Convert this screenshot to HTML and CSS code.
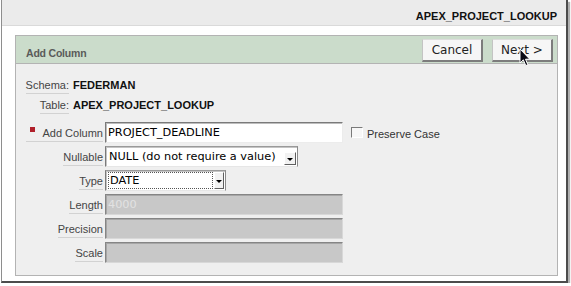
FILE: index.html
```html
<!DOCTYPE html>
<html>
<head>
<meta charset="utf-8">
<link rel="stylesheet" href="styles.css">
</head>
<body>
<div class="window">
  <div class="titlebar"><span class="title">APEX_PROJECT_LOOKUP</span></div>
  <div class="region">
    <div class="region-head">
      <span class="region-title">Add Column</span>
      <div class="btns">
        <button class="btn">Cancel</button>
        <button class="btn">Next &gt;</button>
      </div>
    </div>
    <div class="region-body">
      <div class="info">
        <span class="lbl">Schema:</span><span class="val">FEDERMAN</span>
        <span class="lbl">Table:</span><span class="val">APEX_PROJECT_LOOKUP</span>
      </div>
      <div class="form">
        <span class="flabel"><span class="req"></span>Add Column</span>
        <div class="fcell">
          <span class="input w-long">PROJECT_DEADLINE</span>
          <span class="check"></span>
          <span class="check-lbl">Preserve Case</span>
        </div>

        <span class="flabel">Nullable</span>
        <div class="fcell">
          <span class="select w-null"><span class="sel-text">NULL (do not require a value)</span><span class="arrow"></span></span>
        </div>

        <span class="flabel">Type</span>
        <div class="fcell">
          <span class="select w-type"><span class="sel-text focus">DATE</span><span class="arrow tall"></span></span>
        </div>

        <span class="flabel">Length</span>
        <div class="fcell"><span class="input w-long disabled">4000</span></div>

        <span class="flabel">Precision</span>
        <div class="fcell"><span class="input w-long disabled"></span></div>

        <span class="flabel">Scale</span>
        <div class="fcell"><span class="input w-long disabled"></span></div>
      </div>
    </div>
  </div>
  <svg class="cursor" width="12" height="19" viewBox="0 0 12 19">
    <path d="M1 1 L1 15 L4.3 11.8 L6.8 17.6 L8.9 16.7 L6.5 11.2 L10.8 11.2 Z" fill="#0a0a14" stroke="#ffffff" stroke-width="1"/>
  </svg>
</div>
</body>
</html>
```

FILE: styles.css
```css
html, body {
  margin: 0;
  padding: 0;
  background: #ffffff;
}

.window {
  position: relative;
  width: 564px;
  margin-left: 1px;
  background: #ffffff;
  border-left: 1px solid #8e8e8e;
  border-right: 2px solid #4c4c4c;
  border-bottom: 2px solid #4c4c4c;
  box-shadow: 2px 2px 1px #b0b0b0;
  font-family: "Liberation Sans", Arial, sans-serif;
}

.titlebar {
  height: 25px;
  background: #ebebeb;
  border-bottom: 1px solid #dadada;
  display: flex;
  justify-content: flex-end;
  align-items: center;
  padding-right: 9px;
}

.title {
  font-weight: bold;
  font-size: 11px;
  color: #111;
  margin-top: 7px;
}

.region {
  margin: 9px 8px 5px 13px;
  border: 1px solid #b3b3b3;
  background: #efefef;
}

.region-head {
  height: 27px;
  box-sizing: border-box;
  background: #cbdccb;
  border-bottom: 1px solid #b3b3b3;
  display: flex;
  justify-content: space-between;
  align-items: flex-start;
  padding: 3px 4px 0 10px;
  height: 28px;
}

.region-title {
  font-weight: bold;
  font-size: 10.5px;
  line-height: 14px;
  color: #5a5a5a;
  margin-top: 7px;
  letter-spacing: -0.2px;
}

.btns {
  display: flex;
  gap: 9px;
}

.btn {
  width: 61px;
  height: 23px;
  box-sizing: border-box;
  padding: 0;
  margin: 0;
  background: #f6f6f6;
  border-style: solid;
  border-width: 1px 2px 2px 1px;
  border-color: #dcdcdc #7c7c7c #7c7c7c #c4c4c4;
  font-family: "DejaVu Sans", sans-serif;
  font-size: 12px;
  color: #222;
  line-height: 19px;
  text-align: center;
}

.region-body {
  padding: 14px 0 12px 0;
}

.info {
  display: grid;
  grid-template-columns: 53px auto;
  grid-auto-rows: 16px;
  row-gap: 4px;
  column-gap: 4px;
  justify-content: start;
}

.lbl {
  justify-self: end;
  font-size: 11px;
  line-height: 14px;
  color: #444;
  padding-bottom: 1px;
  border-bottom: 1px solid #d2d2d2;
}

.val {
  font-size: 11px;
  line-height: 14px;
  font-weight: bold;
  color: #111;
}

.form {
  margin-top: 8px;
  display: grid;
  grid-template-columns: 89px 1fr;
  grid-auto-rows: 21px;
  row-gap: 3px;
}

.flabel {
  justify-self: end;
  align-self: end;
  display: flex;
  align-items: flex-start;
  margin: 0 2px 1px 0;
  font-size: 11px;
  line-height: 14px;
  color: #444;
  padding-bottom: 1px;
  border-bottom: 1px solid #d2d2d2;
}

.req {
  width: 5px;
  height: 5px;
  background: #b0202a;
  margin: 1px 7px 0 4px;
}

.fcell {
  display: flex;
  align-items: center;
}

.input {
  box-sizing: border-box;
  height: 21px;
  background: #ffffff;
  border: 1px solid;
  border-color: #7a7a7a #ececec #ececec #7a7a7a;
  box-shadow: inset 1px 1px 0 #bdbdbd;
  font-family: "DejaVu Sans", sans-serif;
  font-size: 11.3px;
  line-height: 19px;
  color: #000;
  padding-left: 2px;
  white-space: nowrap;
}

.w-long {
  width: 238px;
}

.input.disabled {
  background: #c8c8c8;
  border-color: #858585 #d8d8d8 #d8d8d8 #858585;
  box-shadow: inset 1px 1px 0 #a6a6a6;
  color: #e2e2e2;
}

.check {
  width: 12px;
  height: 11px;
  box-sizing: border-box;
  margin-left: 8px;
  background: #f7f7f7;
  border: 1px solid;
  border-color: #7a7a7a #ffffff #ffffff #7a7a7a;
}

.check-lbl {
  margin-left: 4px;
  font-size: 11px;
  color: #333;
  margin-top: 2px;
}

.select {
  box-sizing: border-box;
  height: 21px;
  display: flex;
  align-items: flex-end;
  background: #ffffff;
  border: 1px solid;
  border-color: #9a9a9a #8a8a8a #e6e6e6 #7a7a7a;
  box-shadow: inset 1px 1px 0 #c4c4c4;
  padding: 1px 1px 1px 2px;
}

.w-null {
  width: 193px;
}

.w-type {
  width: 121px;
}

.sel-text {
  flex: 1;
  align-self: stretch;
  font-family: "DejaVu Sans", sans-serif;
  font-size: 11.3px;
  line-height: 17px;
  color: #000;
  white-space: nowrap;
  padding-left: 1px;
}

.sel-text.focus {
  outline: 1px dotted #555;
  outline-offset: -1px;
  padding-left: 2px;
  margin-right: 1px;
}

.arrow {
  position: relative;
  width: 12px;
  height: 13px;
  box-sizing: border-box;
  background: #f2f2f2;
  border: 1px solid;
  border-color: #ffffff #5f5f5f #5f5f5f #ffffff;
}

.arrow.tall {
  width: 10px;
  height: 17px;
}

.arrow::after {
  content: "";
  position: absolute;
  left: 50%;
  top: 50%;
  margin-left: -3px;
  margin-top: -1px;
  border-left: 3px solid transparent;
  border-right: 3px solid transparent;
  border-top: 3px solid #000;
}

.cursor {
  position: absolute;
  left: 517px;
  top: 48px;
}
```
